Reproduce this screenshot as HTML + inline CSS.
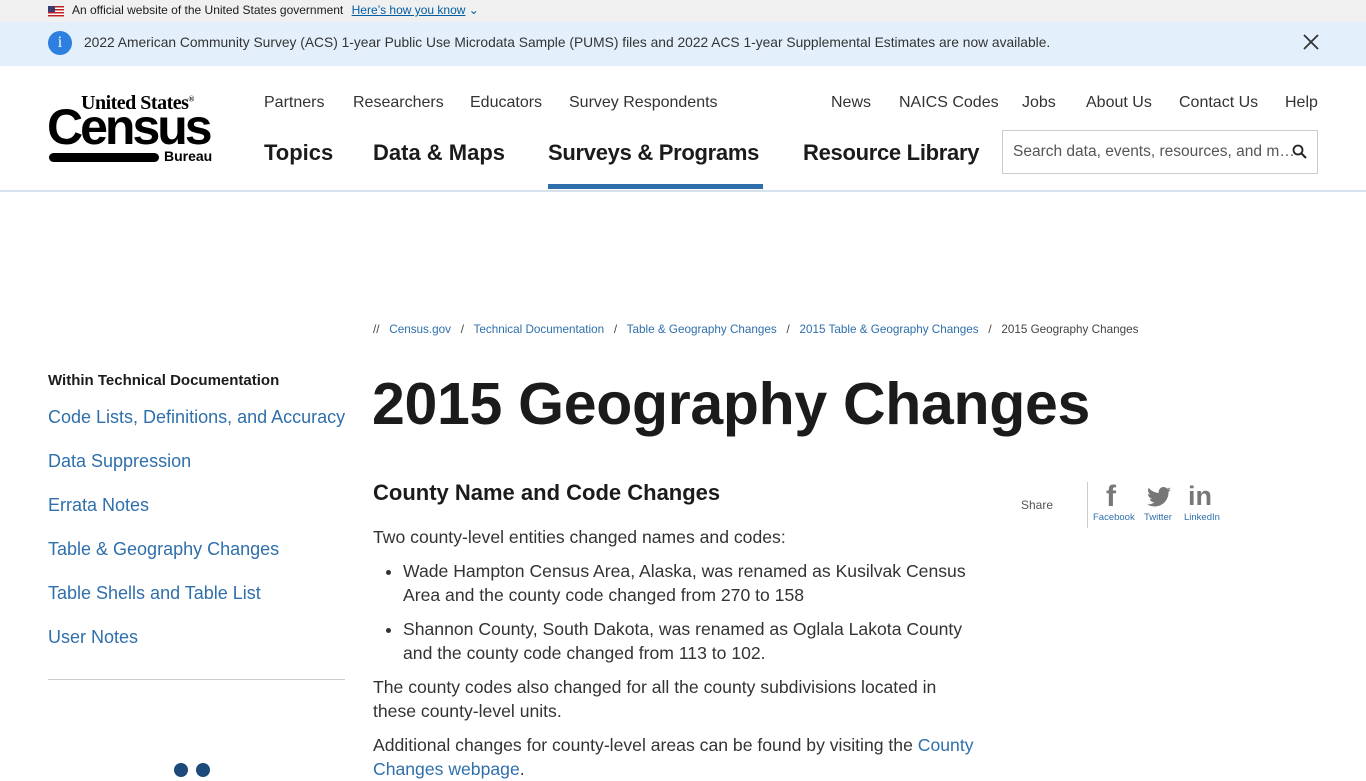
<!DOCTYPE html>
<html><head><meta charset="utf-8"><style>
*{margin:0;padding:0;box-sizing:border-box}
body{width:1366px;height:768px;overflow:hidden;font-family:"Liberation Sans",sans-serif;color:#333;background:#fff;position:relative}
.abs{position:absolute;white-space:nowrap}
a{color:#2f6fab;text-decoration:none}
</style></head><body>
<div class="abs" style="left:0;top:0;width:1366px;height:22px;background:#f0f0f0"></div>
<div class="abs" style="left:48px;top:6px;width:16px;height:11px;background:repeating-linear-gradient(#b22 0 1.5px,#fff 1.5px 3px)"><div style="width:7px;height:6px;background:#3c3b6e"></div></div>
<div class="abs" style="left:72px;top:3px;font-size:12px;color:#1b1b1b">An official website of the United States government <a style="text-decoration:underline;color:#005ea2;margin-left:5px">Here’s how you know</a> <span style="color:#005ea2">⌄</span></div>
<div class="abs" style="left:0;top:22px;width:1366px;height:44px;background:#e3f0fc"></div>
<div class="abs" style="left:48px;top:31px;width:24px;height:24px;border-radius:50%;background:#2d7fe0;color:#fff;text-align:center;font:16px/24px 'Liberation Serif',serif">i</div>
<div class="abs" style="left:84px;top:35px;font-size:13.8px;color:#333">2022 American Community Survey (ACS) 1-year Public Use Microdata Sample (PUMS) files and 2022 ACS 1-year Supplemental Estimates are now available.</div>
<svg class="abs" style="left:1303px;top:34px" width="16" height="16"><path d="M1 1L15 15M15 1L1 15" stroke="#333" stroke-width="1.8"/></svg>
<div class="abs" style="left:81px;top:92px;font:bold 20px 'Liberation Serif',serif;color:#000;letter-spacing:-0.5px">United States<sup style="font-size:8px">®</sup></div>
<div class="abs" style="left:47px;top:100px;font:bold 50px/54px 'Liberation Sans',sans-serif;color:#000;letter-spacing:-3px">Census</div>
<div class="abs" style="left:49px;top:153px;width:110px;height:9px;border-radius:5px;background:#000"></div>
<div class="abs" style="left:164px;top:148px;font:bold 14px 'Liberation Sans',sans-serif;color:#000">Bureau</div>
<div class="abs" style="left:264px;top:94px;font-size:16px;color:#333">Partners</div>
<div class="abs" style="left:353px;top:94px;font-size:16px">Researchers</div>
<div class="abs" style="left:470px;top:94px;font-size:16px">Educators</div>
<div class="abs" style="left:569px;top:94px;font-size:16px">Survey Respondents</div>
<div class="abs" style="left:831px;top:94px;font-size:16px">News</div>
<div class="abs" style="left:899px;top:94px;font-size:16px">NAICS Codes</div>
<div class="abs" style="left:1022px;top:94px;font-size:16px">Jobs</div>
<div class="abs" style="left:1086px;top:94px;font-size:16px">About Us</div>
<div class="abs" style="left:1179px;top:94px;font-size:16px">Contact Us</div>
<div class="abs" style="left:1285px;top:94px;font-size:16px">Help</div>
<div class="abs" style="left:264px;top:140px;font-size:22px;font-weight:bold;color:#1b1b1b">Topics</div>
<div class="abs" style="left:373px;top:140px;font-size:22px;font-weight:bold;color:#1b1b1b">Data &amp; Maps</div>
<div class="abs" style="left:548px;top:140px;font-size:22px;font-weight:bold;color:#1b1b1b;letter-spacing:-0.3px">Surveys &amp; Programs</div>
<div class="abs" style="left:548px;top:184px;width:215px;height:5px;background:#2f6fab"></div>
<div class="abs" style="left:803px;top:140px;font-size:22px;font-weight:bold;color:#1b1b1b;letter-spacing:-0.3px">Resource Library</div>
<div class="abs" style="left:1002px;top:130px;width:316px;height:44px;border:1px solid #ccc;background:#fff"></div>
<div class="abs" style="left:1013px;top:143px;font-size:15.5px;color:#555">Search data, events, resources, and m…</div>
<svg class="abs" style="left:1292px;top:144px" width="16" height="16"><circle cx="6" cy="6" r="4.5" fill="none" stroke="#222" stroke-width="1.8"/><path d="M9.5 9.5L14 14" stroke="#222" stroke-width="2"/></svg>
<div class="abs" style="left:0;top:190px;width:1366px;height:2px;background:#d6e2ee"></div>
<div class="abs" style="left:373px;top:323px;font-size:11.7px;color:#444">// &nbsp;&nbsp;<a>Census.gov</a> &nbsp;&nbsp;/&nbsp;&nbsp; <a>Technical Documentation</a> &nbsp;&nbsp;/&nbsp;&nbsp; <a>Table &amp; Geography Changes</a> &nbsp;&nbsp;/&nbsp;&nbsp; <a>2015 Table &amp; Geography Changes</a> &nbsp;&nbsp;/&nbsp;&nbsp; 2015 Geography Changes</div>
<div class="abs" style="left:48px;top:372px;font-size:15px;font-weight:bold;color:#1b1b1b">Within Technical Documentation</div>
<div class="abs" style="left:48px;top:395px;font-size:18px;line-height:44px;color:#2f6fab">Code Lists, Definitions, and Accuracy<br>Data Suppression<br>Errata Notes<br>Table &amp; Geography Changes<br>Table Shells and Table List<br>User Notes</div>
<div class="abs" style="left:48px;top:679px;width:297px;height:1px;background:#ccc"></div>
<div class="abs" style="left:174px;top:763px;width:14px;height:14px;border-radius:50%;background:#1d4a7a"></div>
<div class="abs" style="left:196px;top:763px;width:14px;height:14px;border-radius:50%;background:#1d4a7a"></div>
<div class="abs" style="left:372px;top:370px;font-size:59px;font-weight:bold;color:#1b1b1b;letter-spacing:-0.3px">2015 Geography Changes</div>
<div class="abs" style="left:373px;top:480px;font-size:22px;font-weight:bold;color:#1b1b1b">County Name and Code Changes</div>
<div class="abs" style="left:373px;top:525px;font-size:17.6px;line-height:24px;color:#333;white-space:normal;width:600px">
<p>Two county-level entities changed names and codes:</p>
<ul style="margin:10px 0 10px 30px"><li>Wade Hampton Census Area, Alaska, was renamed as Kusilvak Census Area and the county code changed from 270 to 158</li><li style="margin-top:10px">Shannon County, South Dakota, was renamed as Oglala Lakota County and the county code changed from 113 to 102.</li></ul>
<p>The county codes also changed for all the county subdivisions located in these county-level units.</p>
<p style="margin-top:10px;width:620px">Additional changes for county-level areas can be found by visiting the <a>County Changes webpage</a>.</p></div>
<div class="abs" style="left:1021px;top:498px;font-size:12px;color:#555">Share</div>
<div class="abs" style="left:1087px;top:482px;width:1px;height:46px;background:#ccc"></div>
<div class="abs" style="left:1106px;top:480px;font:bold 30px 'Liberation Sans',sans-serif;color:#777">f</div>
<svg class="abs" style="left:1147px;top:487px" width="24" height="20" viewBox="0 0 24 20"><path d="M24 2.4a9.8 9.8 0 01-2.8.8A4.9 4.9 0 0023.3.4a9.9 9.9 0 01-3.1 1.2A4.9 4.9 0 0011.8 6 14 14 0 011.7.9a4.9 4.9 0 001.5 6.6A4.9 4.9 0 011 6.9a4.9 4.9 0 003.9 4.9 4.9 4.9 0 01-2.2.1 4.9 4.9 0 004.6 3.4A9.9 9.9 0 010 17.3 14 14 0 007.5 19.5c9.1 0 14-7.5 14-14v-.6A10 10 0 0024 2.4z" fill="#777"/></svg>
<div class="abs" style="left:1188px;top:481px;font:bold 27px 'Liberation Sans',sans-serif;color:#777">in</div>
<div class="abs" style="left:1093px;top:512px;font-size:9.5px;color:#2f6fab">Facebook</div>
<div class="abs" style="left:1144px;top:512px;font-size:9.5px;color:#2f6fab">Twitter</div>
<div class="abs" style="left:1184px;top:512px;font-size:9.5px;color:#2f6fab">LinkedIn</div>
</body></html>
